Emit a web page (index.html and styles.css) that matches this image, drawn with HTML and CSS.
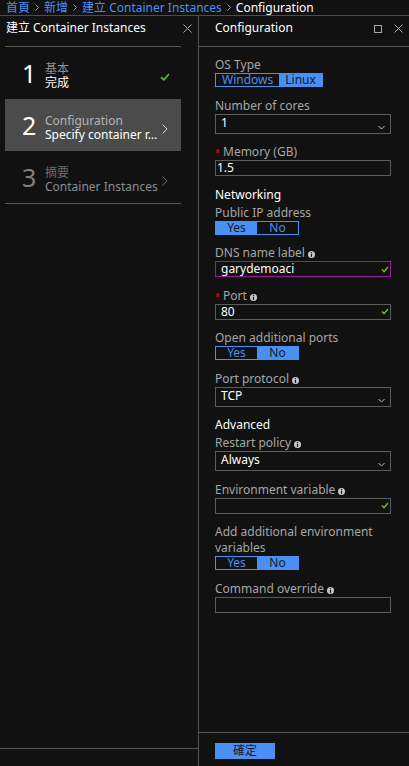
FILE: index.html
```html
<!DOCTYPE html>
<html lang="zh-Hant">
<head>
<meta charset="utf-8">
<title>Configuration</title>
<link rel="stylesheet" href="styles.css">
</head>
<body>
<div class="app">
  <nav class="crumbs">
    <a class="crumb">首頁</a>
    <svg class="sep" width="4" height="7" viewBox="0 0 4 7"><path d="M0.5 0.5L3.5 3.5L0.5 6.5" fill="none" stroke="#9a9a9a"/></svg>
    <a class="crumb">新增</a>
    <svg class="sep" width="4" height="7" viewBox="0 0 4 7"><path d="M0.5 0.5L3.5 3.5L0.5 6.5" fill="none" stroke="#9a9a9a"/></svg>
    <a class="crumb">建立 Container Instances</a>
    <svg class="sep" width="4" height="7" viewBox="0 0 4 7"><path d="M0.5 0.5L3.5 3.5L0.5 6.5" fill="none" stroke="#9a9a9a"/></svg>
    <span class="crumb current">Configuration</span>
  </nav>

  <div class="blades">
    <section class="blade blade-steps">
      <header class="blade-head">
        <h1 class="blade-title">建立 Container Instances</h1>
        <span class="head-icons">
          <svg width="9" height="9" viewBox="0 0 9 9"><path d="M0.5 0.5L8.5 8.5M8.5 0.5L0.5 8.5" stroke="#a8a8a8" fill="none"/></svg>
        </span>
      </header>
      <ol class="steps">
        <li class="step done">
          <span class="num">1</span>
          <span class="step-text"><span class="sub">基本</span><span class="main">完成</span></span>
          <svg class="step-icon" width="10" height="8" viewBox="0 0 10 8"><path d="M1 4.2L3.8 6.8L9 1" fill="none" stroke="#6cbb2c" stroke-width="1.6"/></svg>
        </li>
        <li class="step active">
          <span class="num">2</span>
          <span class="step-text"><span class="sub">Configuration</span><span class="main">Specify container r…</span></span>
          <svg class="step-icon chev" width="6" height="10" viewBox="0 0 6 10"><path d="M0.5 0.5L5 5L0.5 9.5" fill="none" stroke="currentColor"/></svg>
        </li>
        <li class="step todo">
          <span class="num">3</span>
          <span class="step-text"><span class="sub">摘要</span><span class="main">Container Instances</span></span>
          <svg class="step-icon chev" width="6" height="10" viewBox="0 0 6 10"><path d="M0.5 0.5L5 5L0.5 9.5" fill="none" stroke="currentColor"/></svg>
        </li>
      </ol>
      <div class="fill"></div>
      <footer class="steps-foot"></footer>
    </section>

    <section class="blade blade-config">
      <header class="blade-head config-head">
        <h1 class="blade-title">Configuration</h1>
        <span class="head-icons">
          <svg width="8" height="8" viewBox="0 0 8 8"><rect x="0.5" y="0.5" width="7" height="7" fill="none" stroke="#a8a8a8"/></svg>
          <svg width="9" height="9" viewBox="0 0 9 9"><path d="M0.5 0.5L8.5 8.5M8.5 0.5L0.5 8.5" stroke="#a8a8a8" fill="none"/></svg>
        </span>
      </header>

      <div class="form">
        <div class="field">
          <div class="label">OS Type</div>
          <div class="toggle"><span class="opt">Windows</span><span class="opt on">Linux</span></div>
        </div>

        <div class="field">
          <div class="label">Number of cores</div>
          <div class="select"><span class="value">1</span>
            <svg class="caret" width="7" height="5" viewBox="0 0 7 5"><path d="M0.5 1L3.5 4L6.5 1" fill="none" stroke="#c8c8c8"/></svg></div>
        </div>

        <div class="field">
          <div class="label"><span class="req">*</span>Memory (GB)</div>
          <div class="input"><span class="value tight">1.5</span></div>
        </div>

        <div class="heading">Networking</div>

        <div class="field">
          <div class="label">Public IP address</div>
          <div class="toggle"><span class="opt on">Yes</span><span class="opt">No</span></div>
        </div>

        <div class="field">
          <div class="label">DNS name label<svg class="info" width="7" height="7" viewBox="0 0 7 7"><circle cx="3.5" cy="3.5" r="3.5" fill="#c8c8c8"/><rect x="2.9" y="3" width="1.2" height="2.8" fill="#111"/><rect x="2.9" y="1.1" width="1.2" height="1.2" fill="#111"/></svg></div>
          <div class="input focus"><span class="value">garydemoaci</span>
            <svg class="ok-mark" width="8" height="7" viewBox="0 0 8 7"><path d="M1 3.6L3 5.6L7 1" fill="none" stroke="#6cbb2c" stroke-width="1.4"/></svg></div>
        </div>

        <div class="field">
          <div class="label"><span class="req">*</span>Port<svg class="info" width="7" height="7" viewBox="0 0 7 7"><circle cx="3.5" cy="3.5" r="3.5" fill="#c8c8c8"/><rect x="2.9" y="3" width="1.2" height="2.8" fill="#111"/><rect x="2.9" y="1.1" width="1.2" height="1.2" fill="#111"/></svg></div>
          <div class="input"><span class="value">80</span>
            <svg class="ok-mark" width="8" height="7" viewBox="0 0 8 7"><path d="M1 3.6L3 5.6L7 1" fill="none" stroke="#6cbb2c" stroke-width="1.4"/></svg></div>
        </div>

        <div class="field">
          <div class="label">Open additional ports</div>
          <div class="toggle"><span class="opt">Yes</span><span class="opt on">No</span></div>
        </div>

        <div class="field">
          <div class="label">Port protocol<svg class="info" width="7" height="7" viewBox="0 0 7 7"><circle cx="3.5" cy="3.5" r="3.5" fill="#c8c8c8"/><rect x="2.9" y="3" width="1.2" height="2.8" fill="#111"/><rect x="2.9" y="1.1" width="1.2" height="1.2" fill="#111"/></svg></div>
          <div class="select"><span class="value">TCP</span>
            <svg class="caret" width="7" height="5" viewBox="0 0 7 5"><path d="M0.5 1L3.5 4L6.5 1" fill="none" stroke="#c8c8c8"/></svg></div>
        </div>

        <div class="heading">Advanced</div>

        <div class="field">
          <div class="label">Restart policy<svg class="info" width="7" height="7" viewBox="0 0 7 7"><circle cx="3.5" cy="3.5" r="3.5" fill="#c8c8c8"/><rect x="2.9" y="3" width="1.2" height="2.8" fill="#111"/><rect x="2.9" y="1.1" width="1.2" height="1.2" fill="#111"/></svg></div>
          <div class="select"><span class="value">Always</span>
            <svg class="caret" width="7" height="5" viewBox="0 0 7 5"><path d="M0.5 1L3.5 4L6.5 1" fill="none" stroke="#c8c8c8"/></svg></div>
        </div>

        <div class="field">
          <div class="label">Environment variable<svg class="info" width="7" height="7" viewBox="0 0 7 7"><circle cx="3.5" cy="3.5" r="3.5" fill="#c8c8c8"/><rect x="2.9" y="3" width="1.2" height="2.8" fill="#111"/><rect x="2.9" y="1.1" width="1.2" height="1.2" fill="#111"/></svg></div>
          <div class="input"><span class="value"></span>
            <svg class="ok-mark" width="8" height="7" viewBox="0 0 8 7"><path d="M1 3.6L3 5.6L7 1" fill="none" stroke="#6cbb2c" stroke-width="1.4"/></svg></div>
        </div>

        <div class="field">
          <div class="label">Add additional environment variables</div>
          <div class="toggle"><span class="opt">Yes</span><span class="opt on">No</span></div>
        </div>

        <div class="field">
          <div class="label">Command override<svg class="info" width="7" height="7" viewBox="0 0 7 7"><circle cx="3.5" cy="3.5" r="3.5" fill="#c8c8c8"/><rect x="2.9" y="3" width="1.2" height="2.8" fill="#111"/><rect x="2.9" y="1.1" width="1.2" height="1.2" fill="#111"/></svg></div>
          <div class="input"><span class="value"></span></div>
        </div>
      </div>

      <footer class="config-foot">
        <button class="ok-btn" type="button">確定</button>
      </footer>
    </section>
  </div>
</div>
</body>
</html>
```

FILE: styles.css
```css
* {
  box-sizing: border-box;
  margin: 0;
  padding: 0;
}

html,
body {
  width: 409px;
  height: 766px;
  overflow: hidden;
  background: #111111;
}

body {
  font-family: "Noto Sans", "Noto Sans CJK TC", sans-serif;
  font-size: 12px;
  color: #a6a6a6;
}

.app {
  display: flex;
  flex-direction: column;
  height: 766px;
}

/* breadcrumb */
.crumbs {
  height: 16px;
  border-bottom: 1px solid #4c4c4c;
  display: flex;
  align-items: center;
  padding-left: 6px;
  line-height: 15px;
  white-space: nowrap;
}

.crumb {
  color: #4a8ff2;
}

.crumb.current {
  color: #ffffff;
}

.sep {
  margin: 0 5px;
  flex: none;
}

/* blades */
.blades {
  flex: 1;
  display: flex;
  min-height: 0;
}

.blade {
  display: flex;
  flex-direction: column;
}

.blade-steps {
  width: 199px;
  border-right: 1px solid #555555;
}

.blade-config {
  flex: 1;
}

.blade-head {
  height: 30px;
  display: flex;
  align-items: flex-start;
  padding: 4px 0 0 6px;
  flex: none;
}

.config-head {
  height: 31px;
  border-bottom: 1px solid #555555;
  padding-left: 16px;
}

.blade-title {
  font-size: 12px;
  font-weight: normal;
  line-height: 16px;
  color: #ffffff;
  white-space: nowrap;
}

.head-icons {
  margin-left: auto;
  display: flex;
  align-items: center;
  gap: 12px;
  margin-top: 4px;
  margin-right: 6px;
}

/* steps */
.steps {
  list-style: none;
  margin: 0 17px 0 5px;
  border-top: 1px solid #555555;
  border-bottom: 1px solid #555555;
}

.step {
  height: 52px;
  display: flex;
  align-items: flex-start;
  padding-left: 17px;
  padding-right: 11px;
}

.num {
  width: 23px;
  flex: none;
  font-size: 25px;
  line-height: 27px;
  margin-top: 13px;
  color: #ffffff;
}

.step-text {
  flex: 1;
  min-width: 0;
  display: flex;
  flex-direction: column;
  padding-top: 15px;
  line-height: 14px;
  white-space: nowrap;
  overflow: hidden;
}

.sub {
  color: #8e8e8e;
}

.main {
  color: #ffffff;
}

.step-icon {
  flex: none;
  margin-top: 26px;
}

.chev {
  margin-top: 25px;
  margin-right: 2px;
}

.step.active {
  background: #4b4b4b;
}

.step.active .sub {
  color: #b4b4b4;
}

.step.active .chev {
  color: #cfcfcf;
}

.step.todo .num {
  color: #808080;
}

.step.todo .sub {
  color: #6c6c6c;
}

.step.todo .main {
  color: #8c8c8c;
}

.step.todo .chev {
  color: #6a6a6a;
}

.fill {
  flex: 1;
}

.steps-foot {
  height: 18px;
  border-top: 1px solid #555555;
  flex: none;
}

/* form */
.form {
  flex: 1;
  padding: 10px 18px 0 16px;
}

.field {
  margin-bottom: 10.5px;
}

.label {
  line-height: 16px;
  color: #a6a6a6;
}

.heading {
  line-height: 16px;
  color: #ffffff;
  margin-bottom: 2px;
}

.req {
  display: inline-block;
  width: 8px;
  color: #e01010;
  font-size: 9px;
  line-height: 9px;
  vertical-align: 0;
}

.info {
  margin-left: 3px;
  vertical-align: -1px;
}

.toggle {
  display: flex;
  width: max-content;
  height: 14px;
  border: 1px solid #4a8ff2;
}

.opt {
  min-width: 41px;
  padding: 0 6px;
  text-align: center;
  line-height: 12px;
  color: #4a8ff2;
}

.opt.on {
  background: #4a8ff2;
  color: #0e1a2e;
}

.select {
  display: flex;
  height: 20px;
  border: 1px solid #5c5c5c;
  padding: 0 5px;
}

.select .value {
  flex: 1;
  line-height: 15px;
  color: #ffffff;
}

.caret {
  align-self: flex-end;
  margin-bottom: 3px;
}

.input {
  display: flex;
  align-items: center;
  height: 16px;
  border: 1px solid #5c5c5c;
  padding: 0 1px 0 5px;
}

.input.focus {
  border-color: #961a9e;
}

.input .value {
  flex: 1;
  line-height: 14px;
  color: #ffffff;
}

.input .value.tight {
  margin-left: -4px;
}

.ok-mark {
  flex: none;
}

/* footer */
.config-foot {
  height: 34px;
  border-top: 1px solid #555555;
  padding: 10px 0 0 16px;
  flex: none;
}

.ok-btn {
  display: block;
  width: 60px;
  height: 16px;
  border: none;
  background: #4a8ff2;
  color: #1c1c1c;
  font-family: "Noto Sans", "Noto Sans CJK TC", sans-serif;
  font-size: 12px;
  line-height: 16px;
  text-align: center;
}
```
